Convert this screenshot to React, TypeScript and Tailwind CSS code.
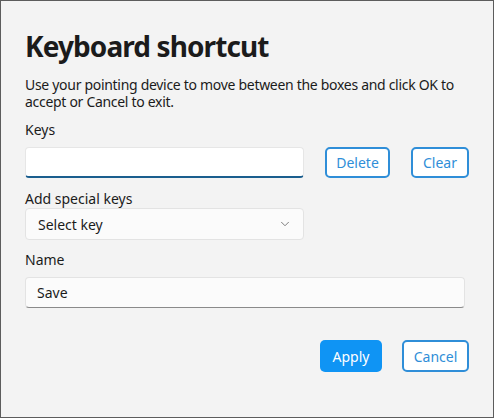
import { ChevronDown } from "lucide-react";

export default function App() {
  return (
    <div
      className="w-[494px] h-[418px] border border-[#5c5c5c] bg-[#f3f3f3] text-[#1b1b1b] px-6 pt-[27px]"
      style={{ fontFamily: '"Noto Sans", "Open Sans", sans-serif' }}
    >
      <h1 className="text-[28px] leading-[36px] font-bold tracking-[-0.9px]">Keyboard shortcut</h1>

      <p className="mt-[12px] text-[14px] leading-[17px] tracking-[-0.3px]">
        Use your pointing device to move between the boxes and click OK to accept or Cancel to exit.
      </p>

      {/* Keys */}
      <div className="mt-[11px] text-[14px] leading-[18px]">Keys</div>
      <div className="mt-[8px] flex items-center gap-[21px]">
        <input
          className="w-[279px] h-[31px] bg-white rounded-[4px] border border-[#e6e6e6] border-b-2 border-b-[#1a5e8e] outline-none px-3 text-[14px]"
          defaultValue=""
        />
        <button className="w-[65px] h-[31px] rounded-[5px] border-2 border-[#2f8ed8] bg-white text-[14px] text-[#2f8ed8]">
          Delete
        </button>
        <button className="w-[58px] h-[31px] rounded-[5px] border-2 border-[#2f8ed8] bg-white text-[14px] text-[#2f8ed8]">
          Clear
        </button>
      </div>

      {/* Special keys */}
      <div className="mt-[12px] text-[14px] leading-[18px]">Add special keys</div>
      <div className="w-[279px] h-[32px] rounded-[4px] border border-[#e3e3e3] bg-[#fbfbfb] flex items-center justify-between pl-3 pr-[11px] text-[14px]">
        <span>Select key</span>
        <ChevronDown className="w-[14px] h-[14px] text-[#6b6b6b]" strokeWidth={1.5} />
      </div>

      {/* Name */}
      <div className="mt-[11px] text-[14px] leading-[18px]">Name</div>
      <input
        className="mt-[8px] block w-[440px] h-[31px] bg-[#fbfbfb] rounded-[4px] border border-[#e3e3e3] border-b-[#8a8a8a] outline-none px-[11px] text-[14px] text-[#1b1b1b]"
        defaultValue="Save"
      />

      <div className="mt-[32px] flex justify-end gap-[20px]">
        <button className="w-[62px] h-[32px] rounded-[5px] bg-[#0f94f4] text-white text-[14px]">Apply</button>
        <button className="w-[67px] h-[32px] rounded-[5px] border-2 border-[#2f8ed8] bg-white text-[14px] text-[#2f8ed8]">
          Cancel
        </button>
      </div>
    </div>
  );
}
